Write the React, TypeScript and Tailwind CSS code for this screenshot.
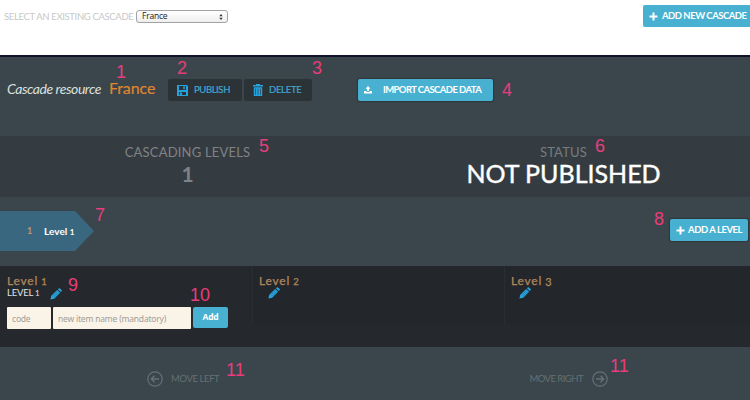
import React from "react";

const Note = ({ at, children }: { at: string; children: React.ReactNode }) => (
  <span className={`absolute z-10 font-['Liberation_Sans',sans-serif] text-[18px] leading-[20px] whitespace-nowrap text-[#e93c7c] ${at}`}>{children}</span>
);

const Plus = () => (
  <svg className="h-[9px] w-[9px] shrink-0" viewBox="0 0 9 9" fill="white"><path d="M3.5 .5h2v3h3v2h-3v3h-2v-3h-3v-2h3z" /></svg>
);

const Disk = () => (
  <svg className="h-[11px] w-[11px] shrink-0" viewBox="0 0 11 11" fill="#25a3de" fillRule="evenodd">
    <path d="M0 0h9.8L11 1.2V11H0zM2 1v4h7V1zM2 7v3h7V7z" /><path d="M6.3 1.3h1.5v3H6.3zM3 7.5h2V10H3z" />
  </svg>
);

const Trash = () => (
  <svg className="h-[12px] w-[10px] shrink-0" viewBox="0 0 10 12" fill="#25a3de" fillRule="evenodd">
    <path d="M3 1V0h4v1h3v1.6H0V1zM.8 3.3h8.4V12H.8zM2.4 4.5v6.3h.6V4.5zm2.3 0v6.3h.6V4.5zm2.3 0v6.3h.6V4.5z" />
  </svg>
);

const Upload = () => (
  <svg className="h-[8px] w-[8px] shrink-0" viewBox="0 0 8 8" fill="white"><path d="M4 0l2.5 2.7H5V5H3V2.7H1.5zM0 5h2l1 1h2l1-1h2v2.5H0z" /></svg>
);

const Pencil = () => (
  <svg className="h-[12px] w-[12px] shrink-0" viewBox="0 0 12 12">
    <path d="M.4 11.6l.9-3.8 5.9-5.9 2.9 2.9-5.9 5.9zM7.9 1.2L8.7.4q.6-.5 1.2 0l1.7 1.7q.5.6 0 1.2l-.8.8z" fill="#27a6e0" />
    <path d="M2.5 8.4l5-5M3.7 9.5l5-5" stroke="#1c6488" strokeWidth=".5" />
  </svg>
);

const CircleArrow = ({ flip }: { flip?: boolean }) => (
  <svg className={`h-[16px] w-[16px] shrink-0 ${flip ? "rotate-180" : ""}`} viewBox="0 0 16 16" fill="none" stroke="#637076" strokeWidth="1.2">
    <circle cx="8" cy="8" r="7.2" /><path d="M12 8H4.3M7.5 4.8L4.3 8l3.2 3.2" strokeWidth="1.4" />
  </svg>
);

const LevelTitle = ({ n }: { n: number }) => (
  <div className="flex h-[12px] items-baseline text-[12px] leading-[12px] tracking-[0.8px] text-[#b1865c] [-webkit-text-stroke:0.25px_#b1865c]">
    <span>Level</span>
    <span className={`ml-[3px] inline-block tracking-normal ${n === 3 ? "relative top-[1px] text-[11px]" : "text-[9.5px]"}`}>{n}</span>
  </div>
);

export default function App() {
  return (
    <div className="relative flex h-[400px] w-[750px] flex-col overflow-hidden bg-[#3a464b] font-['Lato',sans-serif]">
      <header className="flex h-[57px] shrink-0 items-start border-b-2 border-[#10132a] bg-white pl-[4px]">
        <label className="mt-[10px] w-[132px] text-[9.5px] leading-[13px] tracking-[-0.35px] whitespace-nowrap text-[#c8c8c8]">SELECT AN EXISTING CASCADE</label>
        <div className="mt-[10px] flex h-[13px] w-[92px] items-center justify-between rounded-[3px] border border-[#a2a2a2] bg-gradient-to-b from-white to-[#eeeeee] pr-[4px] pl-[5px] font-['Open_Sans',sans-serif] text-[8.5px] tracking-[-0.2px] text-[#222222]">
          <span>France</span>
          <svg className="h-[6px] w-[4px]" viewBox="0 0 4 6" fill="#333"><path d="M2 0l1.7 2.2H.3zM2 6L.3 3.8h3.4z" /></svg>
        </div>
        <button className="mt-[5px] ml-auto flex h-[22px] w-[107px] items-center gap-[4px] rounded-l-[2px] bg-[#48b0d0] pl-[6px] text-[9.5px] font-bold tracking-[-0.5px] whitespace-nowrap text-white"><Plus />ADD NEW CASCADE</button>
      </header>

      <section className="flex h-[79px] shrink-0 items-start pl-[7px]">
        <h1 className="mt-[22px] w-[102px] text-[14px] leading-[20px] font-normal tracking-[-0.45px] whitespace-nowrap text-[#dce0df] italic">Cascade resource</h1>
        <h2 className="mt-[21px] w-[59px] text-[16px] leading-[20px] tracking-[-0.1px] text-[#df8530] [-webkit-text-stroke:0.2px_#df8530]">France</h2>
        <button className="mt-[22px] flex h-[22px] w-[74px] items-center gap-[6px] rounded-[2px] bg-[#2c3337] pl-[9px] text-[9.5px] tracking-[-0.4px] whitespace-nowrap text-[#40a8d1] [-webkit-text-stroke:0.2px_#40a8d1]"><Disk />PUBLISH</button>
        <button className="mt-[22px] ml-[2px] flex h-[22px] w-[68px] items-center gap-[6px] rounded-[2px] bg-[#2c3337] pl-[9px] text-[9.5px] tracking-[-0.3px] whitespace-nowrap text-[#40a8d1] [-webkit-text-stroke:0.2px_#40a8d1]"><Trash />DELETE</button>
        <button className="mt-[22px] ml-[46px] flex h-[22px] w-[135px] items-center gap-[11px] rounded-[2px] bg-[#48b0d0] pl-[6px] text-[9.5px] font-bold tracking-[-0.6px] whitespace-nowrap text-white shadow-[0_0_1px_1px_#30373b]"><Upload />IMPORT CASCADE DATA</button>
      </section>

      <section className="grid h-[61px] shrink-0 grid-cols-2 bg-[#343c41] text-center">
        <div className="pt-[8px]">
          <div className="text-[13px] leading-[16px] tracking-[0.2px] whitespace-nowrap text-[#808385]">CASCADING LEVELS</div>
          <div className="text-[21px] leading-[28px] font-bold text-[#808385]">1</div>
        </div>
        <div className="pt-[8px] pr-[1px] pl-[3px]">
          <div className="text-[13px] leading-[16px] tracking-[0.2px] text-[#777c7e]">STATUS</div>
          <div className="text-[25px] leading-[26px] whitespace-nowrap text-white [-webkit-text-stroke:0.4px_white]">NOT PUBLISHED</div>
        </div>
      </section>

      <section className="flex h-[69px] shrink-0 items-start justify-between">
        <div className="mt-[14px] flex h-[40px] w-[94px] items-center bg-[#3a6780] pl-[27px] text-[10px] [clip-path:polygon(0_0,75px_0,100%_50%,75px_100%,0_100%)]">
          <span className="w-[17px] text-[9px] font-bold text-[#bb966a]">1</span>
          <span className="font-bold tracking-[0.05px] whitespace-nowrap text-white">Level <span className="text-[8px]">1</span></span>
        </div>
        <button className="mt-[22px] mr-[2px] flex h-[22px] w-[78px] items-center gap-[3px] rounded-[2px] bg-[#48b0d0] pl-[6px] text-[9.5px] font-bold tracking-[-0.45px] whitespace-nowrap text-white shadow-[0_0_1px_1px_#30373b]"><Plus />ADD A LEVEL</button>
      </section>

      <section className="grid h-[81px] shrink-0 grid-cols-[252px_252px_246px] bg-[#25292d]">
        <div className="pt-[9px] pl-[7px]">
          <LevelTitle n={1} />
          <div className="flex h-[12px] items-center text-[9.5px] leading-[12px] tracking-[-0.2px] whitespace-nowrap text-[#e0e3e5]">
            <span className="w-[43px]">LEVEL <span className="text-[8px]">1</span></span><span className="flex translate-y-px"><Pencil /></span>
          </div>
          <div className="mt-[8px] flex h-[22px] gap-[2px] font-['Noto_Sans',sans-serif] text-[8.5px] tracking-[-0.2px] text-[#a19e98]">
            <input className="h-[22px] w-[44px] rounded-[1px] bg-[#faf3e7] px-[5px] placeholder:text-[#a19e98]" placeholder="code" />
            <input className="h-[22px] w-[138px] rounded-[1px] bg-[#faf3e7] px-[5px] placeholder:text-[#a19e98]" placeholder="new item name (mandatory)" />
            <button className="h-[21px] w-[35px] rounded-[2px] bg-[#48b0d0] font-bold text-white">Add</button>
          </div>
        </div>
        <div className="h-[59px] border-l border-[#292e31] bg-[#23272b] pt-[9px] pl-[6px]"><LevelTitle n={2} /><div className="pl-[9px]"><Pencil /></div></div>
        <div className="h-[59px] border-l border-[#292e31] bg-[#23272b] pt-[9px] pl-[6px]"><LevelTitle n={3} /><div className="pl-[8px]"><Pencil /></div></div>
      </section>

      <footer className="flex h-[53px] items-start justify-between bg-[#3a464b] pt-[24px] pr-[142px] pl-[147px] text-[9.5px] text-[#637076]">
        <div className="flex h-[16px] items-center gap-[8px] tracking-[-0.4px] whitespace-nowrap"><CircleArrow />MOVE LEFT</div>
        <div className="flex h-[16px] items-center gap-[9px] tracking-[-0.55px] whitespace-nowrap">MOVE RIGHT<CircleArrow flip /></div>
      </footer>

      <Note at="left-[116px] top-[62px]">1</Note>
      <Note at="left-[177px] top-[58px]">2</Note>
      <Note at="left-[312px] top-[58px]">3</Note>
      <Note at="left-[502px] top-[80px]">4</Note>
      <Note at="left-[259px] top-[136px]">5</Note>
      <Note at="left-[595px] top-[136px]">6</Note>
      <Note at="left-[95px] top-[205px]">7</Note>
      <Note at="left-[654px] top-[209px]">8</Note>
      <Note at="left-[68px] top-[275px]">9</Note>
      <Note at="left-[190px] top-[285px]">10</Note>
      <Note at="left-[226px] top-[360px]">11</Note>
      <Note at="left-[610px] top-[356px]">11</Note>
    </div>
  );
}
